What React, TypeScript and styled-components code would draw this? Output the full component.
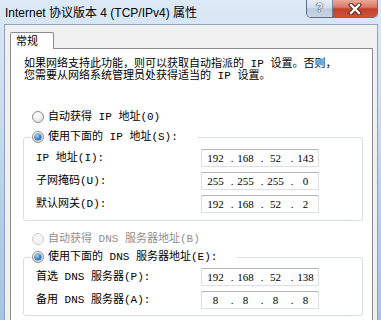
import React from 'react';
import styled, { createGlobalStyle } from 'styled-components';

const Global = createGlobalStyle`
  html, body { margin: 0; padding: 0; }
  body { width: 381px; height: 320px; overflow: hidden; background: #c9dcf0; }
  * { box-sizing: border-box; }
`;

const Window = styled.div`
  width: 381px;
  height: 320px;
  display: flex;
  flex-direction: column;
  overflow: hidden;
  background: linear-gradient(180deg, #dce9f6 0%, #cddff1 30%, #b4cce8 70%, #a9c3e3 100%);
`;

const TitleBar = styled.div`
  height: 24px;
  flex: none;
  display: flex;
  align-items: flex-start;
`;

const Title = styled.div`
  flex: 1;
  padding: 6px 0 0 5px;
  font: 12px/14px "Liberation Sans", "Noto Sans CJK SC", sans-serif;
  color: #000;
  white-space: nowrap;
`;

const CaptionButtons = styled.div`
  display: flex;
  height: 18px;
  margin-right: 3px;
  border: 1px solid rgba(52, 70, 98, 0.75);
  border-top: none;
  border-radius: 0 0 5px 5px;
  overflow: hidden;
`;

const HelpButton = styled.div`
  width: 26px;
  display: flex;
  align-items: center;
  justify-content: center;
  border-right: 1px solid rgba(52, 70, 98, 0.6);
  background: linear-gradient(180deg, #e7eef6 0%, #d3dfeb 45%, #bccbdd 52%, #c7d5e4 100%);
  font: bold 12px/1 "Liberation Sans", sans-serif;
  color: #fff;
  text-shadow: 0 0 1px #2c3f58, 0 0 1px #2c3f58, 0 0 1px #2c3f58;
  padding-bottom: 1px;
`;

const CloseButton = styled.div`
  width: 44px;
  display: flex;
  align-items: center;
  justify-content: center;
  background: linear-gradient(180deg, #eaa999 0%, #dc7b66 42%, #c5412b 52%, #c9523b 100%);
`;

const Body = styled.div`
  flex: 1;
  margin: 0 3px 0 4px;
  background: #f0f0f0;
  border: 1px solid #8ea3bb;
  border-bottom: none;
  padding: 7px 4px 0 5px;
  display: flex;
  flex-direction: column;
`;

const TabStrip = styled.div`
  display: flex;
  flex: none;
`;

const Tab = styled.div`
  width: 44px;
  height: 17px;
  margin-bottom: -1px;
  position: relative;
  z-index: 1;
  background: #fff;
  border: 1px solid #898c95;
  border-bottom: none;
  border-radius: 2px 2px 0 0;
  padding: 1px 0 0 5px;
  font: 11px/13px "Noto Sans CJK SC", sans-serif;
  color: #000;
`;

const Panel = styled.div`
  flex: 1;
  background: #fff;
  border: 1px solid #898c95;
  border-bottom: none;
  padding-top: 9px;
  display: flex;
  flex-direction: column;
  font: 11px/12px "Liberation Mono", "Noto Sans CJK SC", monospace;
  color: #000;
`;

const Intro = styled.p`
  margin: 0 0 0 13px;
  white-space: nowrap;
`;

const RadioRow = styled.label<{ $disabled?: boolean; $top?: number }>`
  display: flex;
  align-items: center;
  gap: 4px;
  height: 14px;
  margin-top: ${p => p.$top ?? 0}px;
  padding-left: 21px;
  white-space: nowrap;
  color: ${p => (p.$disabled ? '#8f8f8f' : '#000')};
`;

const LegendRow = styled.label`
  display: flex;
  align-items: center;
  gap: 4px;
  height: 14px;
  white-space: nowrap;
`;

const RadioDot = styled.span<{ $checked?: boolean; $disabled?: boolean }>`
  flex: none;
  width: 12px;
  height: 12px;
  border-radius: 50%;
  border: 1px solid ${p => (p.$disabled ? '#cfd0d2' : '#8a8d92')};
  background: ${p =>
    p.$disabled
      ? '#f5f5f5'
      : 'radial-gradient(circle at 40% 35%, #ffffff 0%, #f3f3f3 40%, #d2d2d2 100%)'};
  display: flex;
  align-items: center;
  justify-content: center;
  &::after {
    content: '';
    display: ${p => (p.$checked ? 'block' : 'none')};
    width: 6px;
    height: 6px;
    border-radius: 50%;
    background: radial-gradient(circle at 35% 30%, #a9e2ff 0%, #3f90da 45%, #0f4a8c 100%);
    box-shadow: 0 0 0 0.6px #1b4f88;
  }
`;

const Group = styled.fieldset<{ $top: number }>`
  margin: ${p => p.$top}px 9px 0 12px;
  padding: 0;
  border: 1px solid #d5dfe5;
  border-radius: 3px;
  min-width: 0;
`;

const Legend = styled.legend`
  margin-left: 7px;
  padding: 0 20px 0 1px;
`;

const GroupBody = styled.div<{ $top: number; $bottom: number }>`
  display: flex;
  flex-direction: column;
  gap: 5px;
  padding: ${p => p.$top}px 0 ${p => p.$bottom}px 12px;
`;

const FieldRow = styled.div`
  display: grid;
  grid-template-columns: 165px 118px;
  align-items: center;
  height: 18px;
  white-space: nowrap;
`;

const IpBox = styled.div`
  width: 118px;
  height: 18px;
  display: flex;
  align-items: center;
  background: #fff;
  border: 1px solid #dcdfe4;
  border-top-color: #b3b6bd;
  overflow: hidden;
  font: 11px/16px "Liberation Serif", serif;
  color: #000;
`;

const Seg = styled.span`
  display: flex;
  flex: none;
  width: 30px;
`;

const Num = styled.span`
  flex: none;
  width: 27px;
  text-align: center;
`;

const Dot = styled.span`
  flex: none;
  width: 6px;
  margin-right: -3px;
  display: flex;
  justify-content: center;
`;

const CloseIcon = () => (
  <svg width="14" height="12" viewBox="0 0 14 12">
    <path d="M3 2 L11 10 M11 2 L3 10" stroke="#5a2119" strokeWidth="4.4" strokeLinecap="square" />
    <path d="M3 2 L11 10 M11 2 L3 10" stroke="#fff" strokeWidth="2.4" strokeLinecap="square" />
  </svg>
);

const IpField = ({ value }: { value: string }) => {
  const parts = value.split('.');
  return (
    <IpBox>
      {parts.map((p, i) => (
        <Seg key={i}>
          <Num>{p}</Num>
          {i < parts.length - 1 && <Dot>.</Dot>}
        </Seg>
      ))}
    </IpBox>
  );
};

const Field = ({ label, value }: { label: string; value: string }) => (
  <FieldRow>
    <span>{label}</span>
    <IpField value={value} />
  </FieldRow>
);

export default function App() {
  return (
    <>
      <Global />
      <Window>
        <TitleBar>
          <Title>Internet 协议版本 4 (TCP/IPv4) 属性</Title>
          <CaptionButtons>
            <HelpButton>?</HelpButton>
            <CloseButton>
              <CloseIcon />
            </CloseButton>
          </CaptionButtons>
        </TitleBar>
        <Body>
          <TabStrip>
            <Tab>常规</Tab>
          </TabStrip>
          <Panel>
            <Intro>
              如果网络支持此功能，则可以获取自动指派的 IP 设置。否则，
              <br />
              您需要从网络系统管理员处获得适当的 IP 设置。
            </Intro>
            <RadioRow $top={28}>
              <RadioDot />
              自动获得 IP 地址(0)
            </RadioRow>
            <Group $top={6}>
              <Legend>
                <LegendRow>
                  <RadioDot $checked />
                  使用下面的 IP 地址(S):
                </LegendRow>
              </Legend>
              <GroupBody $top={5} $bottom={7}>
                <Field label="IP 地址(I):" value="192.168.52.143" />
                <Field label="子网掩码(U):" value="255.255.255.0" />
                <Field label="默认网关(D):" value="192.168.52.2" />
              </GroupBody>
            </Group>
            <RadioRow $top={11} $disabled>
              <RadioDot $disabled />
              自动获得 DNS 服务器地址(B)
            </RadioRow>
            <Group $top={4}>
              <Legend>
                <LegendRow>
                  <RadioDot $checked />
                  使用下面的 DNS 服务器地址(E):
                </LegendRow>
              </Legend>
              <GroupBody $top={4} $bottom={6}>
                <Field label="首选 DNS 服务器(P):" value="192.168.52.138" />
                <Field label="备用 DNS 服务器(A):" value="8.8.8.8" />
              </GroupBody>
            </Group>
          </Panel>
        </Body>
      </Window>
    </>
  );
}
